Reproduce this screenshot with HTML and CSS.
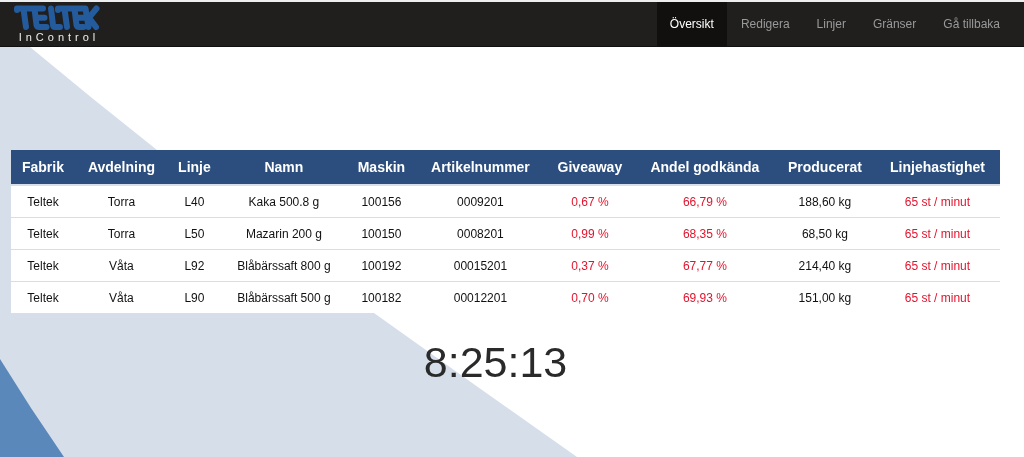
FILE: index.html
```html
<!DOCTYPE html>
<html lang="sv">
<head>
<meta charset="utf-8">
<title>Teltek InControl</title>
<meta name="viewport" content="width=device-width, initial-scale=1">
<link rel="stylesheet" href="styles.css">
</head>
<body>
<svg class="backdrop" viewBox="0 0 1024 457" preserveAspectRatio="none" aria-hidden="true">
  <path class="backdrop-light" d="M0 40H21L30 47L92 98L157 150L264 232L374 313L475 385L577 457H0Z"/>
  <path class="backdrop-blue" d="M0 359L31 408L64 457H0Z"/>
</svg>
<header class="navbar">
  <a class="brand" href="#" aria-label="Teltek InControl">
    <svg class="brand-mark" viewBox="0 0 88 27" aria-hidden="true">
      <path d="M4 4.5H30M4 4.5V6M10.5 5L13 23M21.5 5L23.5 21Q24 23 26 23H33.5M23 13.7H31.5M38 4.5L40 21Q40.3 23 42 23H47M45 4.5H71M45 4.5V6M51.5 5L54 23M61.5 5L63.5 21Q64 23 66 23H70.5M63 13.7H71M72.5 4.5L75.5 23M83.5 4.5L76 13.7L83 23"/>
    </svg>
    <span class="brand-name">InControl</span>
  </a>
  <nav class="menu">
    <a class="menu-link active" href="#" aria-current="page">Översikt</a>
    <a class="menu-link" href="#">Redigera</a>
    <a class="menu-link" href="#">Linjer</a>
    <a class="menu-link" href="#">Gränser</a>
    <a class="menu-link" href="#">Gå tillbaka</a>
  </nav>
</header>
<main class="content">
  <table class="lines">
    <colgroup>
      <col class="col-factory"><col class="col-department"><col class="col-line"><col class="col-name"><col class="col-machine"><col class="col-article"><col class="col-giveaway"><col class="col-approved"><col class="col-produced"><col class="col-speed">
    </colgroup>
    <thead>
      <tr><th>Fabrik</th><th>Avdelning</th><th>Linje</th><th>Namn</th><th>Maskin</th><th>Artikelnummer</th><th>Giveaway</th><th>Andel godkända</th><th>Producerat</th><th>Linjehastighet</th></tr>
    </thead>
    <tbody>
      <tr><td>Teltek</td><td>Torra</td><td>L40</td><td>Kaka 500.8 g</td><td>100156</td><td>0009201</td><td class="alert">0,67 %</td><td class="alert">66,79 %</td><td>188,60 kg</td><td class="alert">65 st / minut</td></tr>
      <tr><td>Teltek</td><td>Torra</td><td>L50</td><td>Mazarin 200 g</td><td>100150</td><td>0008201</td><td class="alert">0,99 %</td><td class="alert">68,35 %</td><td>68,50 kg</td><td class="alert">65 st / minut</td></tr>
      <tr><td>Teltek</td><td>Våta</td><td>L92</td><td>Blåbärssaft 800 g</td><td>100192</td><td>00015201</td><td class="alert">0,37 %</td><td class="alert">67,77 %</td><td>214,40 kg</td><td class="alert">65 st / minut</td></tr>
      <tr><td>Teltek</td><td>Våta</td><td>L90</td><td>Blåbärssaft 500 g</td><td>100182</td><td>00012201</td><td class="alert">0,70 %</td><td class="alert">69,93 %</td><td>151,00 kg</td><td class="alert">65 st / minut</td></tr>
    </tbody>
  </table>
  <time class="clock">8:25:13</time>
</main>
</body>
</html>
```
FILE: styles.css
```css
* {
  box-sizing: border-box;
}

body {
  margin: 0;
  background: #fff;
  color: #111;
  font: 12px/16px "Liberation Sans", Arial, sans-serif;
}

.backdrop {
  position: fixed;
  inset: 0;
  z-index: -1;
  width: 100%;
  height: 100%;
}

.backdrop-light {
  fill: #d6deea;
}

.backdrop-blue {
  fill: #5b88ba;
}

.navbar {
  display: flex;
  justify-content: space-between;
  padding: 0 11px 0 13px;
  border-top: 2px solid #eee;
  border-bottom: 1px solid #101010;
  background: #211f1e;
}

.brand {
  display: flex;
  flex-direction: column;
  align-items: center;
  padding-top: 2px;
  color: #eee;
  text-decoration: none;
}

.brand-mark {
  width: 88px;
  height: 27px;
  fill: none;
  stroke: #245b9c;
  stroke-width: 6;
  stroke-linecap: round;
  stroke-linejoin: round;
}

.brand-name {
  padding-left: 4px;
  font-size: 11px;
  line-height: 12px;
  letter-spacing: 4px;
}

.menu {
  display: flex;
  gap: 1px;
}

.menu-link {
  padding: 14px 13px;
  color: #999;
  text-decoration: none;
}

.menu-link.active {
  background: #11100f;
  color: #fff;
}

.content {
  padding: 103px 24px 0 11px;
  text-align: center;
}

.lines {
  width: 100%;
  table-layout: fixed;
  border-collapse: separate;
  border-spacing: 0;
  background: #fff;
}

.lines th {
  padding: 9px 0;
  border-bottom: 2px solid #d9deea;
  background: #2b4e7e;
  background-clip: padding-box;
  color: #fff;
  font-size: 14px;
  line-height: 16px;
  white-space: nowrap;
}

.lines td {
  padding: 8px 0 7px;
  border-bottom: 1px solid #ddd;
  white-space: nowrap;
}

.lines tbody tr:last-child td {
  border-bottom: 0;
}

.lines .alert {
  color: #e2142d;
}

.col-factory { width: 6.47%; }
.col-department { width: 9.4%; }
.col-line { width: 5.36%; }
.col-name { width: 12.74%; }
.col-machine { width: 6.98%; }
.col-article { width: 13.04%; }
.col-giveaway { width: 9.1%; }
.col-approved { width: 14.16%; }
.col-produced { width: 10.11%; }
.col-speed { width: 12.64%; }

.clock {
  display: block;
  margin-top: 24px;
  padding-right: 20px;
  color: #2a2a2a;
  font-size: 43px;
  line-height: 50px;
}
```
